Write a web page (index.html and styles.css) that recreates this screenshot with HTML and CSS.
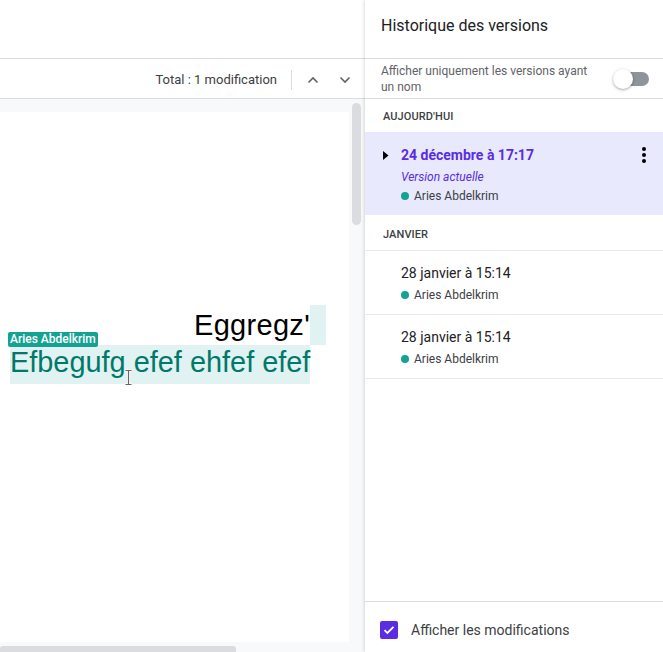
FILE: index.html
```html
<!DOCTYPE html>
<html lang="fr">
<head>
<meta charset="utf-8">
<title>Historique des versions</title>
<link rel="stylesheet" href="styles.css">
</head>
<body>
<div class="app">
  <main class="main">
    <div class="topbar"></div>
    <div class="toolbar">
      <span class="total">Total : 1 modification</span>
      <span class="divider"></span>
      <button class="nav-btn" aria-label="Précédente">
        <svg width="12" height="8" viewBox="0 0 12 8"><path d="M1.5 6.5 6 2l4.5 4.5" fill="none" stroke="#5f6368" stroke-width="1.6"/></svg>
      </button>
      <button class="nav-btn" aria-label="Suivante">
        <svg width="12" height="8" viewBox="0 0 12 8"><path d="M1.5 1.5 6 6l4.5-4.5" fill="none" stroke="#5f6368" stroke-width="1.6"/></svg>
      </button>
    </div>
    <div class="doc-area">
      <div class="doc-scroll">
        <div class="page">
          <div class="line line-right">
            <span class="plain">Eggregz'</span><span class="ins-gap"></span>
          </div>
          <div class="line line-ins">
            <span class="author-tag">Aries Abdelkrim</span>
            <span class="ins">Efbegufg efef ehfef efef</span>
            <svg class="ibeam" width="9" height="17" viewBox="0 0 9 17"><path d="M1.5 1.5h6M1.5 15.5h6M4.5 1.5v14" fill="none" stroke="#fff" stroke-width="3"/><path d="M1.5 1.5h6M1.5 15.5h6M4.5 1.5v14" fill="none" stroke="#666" stroke-width="1.2"/></svg>
          </div>
        </div>
        <div class="vscroll"><div class="vthumb"></div></div>
      </div>
      <div class="hscroll"><div class="hthumb"></div></div>
    </div>
  </main>
  <aside class="sidebar">
    <div class="side-header">Historique des versions</div>
    <div class="toggle-row">
      <span class="toggle-label">Afficher uniquement les versions ayant un nom</span>
      <span class="toggle"><span class="track"></span><span class="thumb"></span></span>
    </div>
    <div class="versions">
      <div class="group-label">AUJOURD'HUI</div>
      <div class="version selected">
        <svg class="caret" width="6" height="9" viewBox="0 0 6 9"><path d="M0 0l5.5 4.5L0 9z" fill="#000"/></svg>
        <div class="v-body">
          <div class="v-date">24 décembre à 17:17</div>
          <div class="v-current">Version actuelle</div>
          <div class="v-author"><span class="dot"></span>Aries Abdelkrim</div>
        </div>
        <svg class="kebab" width="4" height="16" viewBox="0 0 4 16"><circle cx="2" cy="2" r="2"/><circle cx="2" cy="8" r="2"/><circle cx="2" cy="14" r="2"/></svg>
      </div>
      <div class="group-label group-bordered">JANVIER</div>
      <div class="version">
        <div class="v-body">
          <div class="v-date plain-date">28 janvier à 15:14</div>
          <div class="v-author"><span class="dot"></span>Aries Abdelkrim</div>
        </div>
      </div>
      <div class="version">
        <div class="v-body">
          <div class="v-date plain-date">28 janvier à 15:14</div>
          <div class="v-author"><span class="dot"></span>Aries Abdelkrim</div>
        </div>
      </div>
    </div>
    <div class="side-footer">
      <span class="checkbox">
        <svg width="12" height="10" viewBox="0 0 12 10"><path d="M1.5 5.2 4.4 8 10.5 1.8" fill="none" stroke="#fff" stroke-width="1.8"/></svg>
      </span>
      <span class="footer-label">Afficher les modifications</span>
    </div>
  </aside>
</div>
</body>
</html>
```
FILE: styles.css
```css
* { box-sizing: border-box; }
html, body { margin: 0; padding: 0; height: 100%; overflow: hidden; }
body { font-family: Roboto, "Liberation Sans", Arial, sans-serif; color: #202124; background: #fff; }

.app { display: flex; width: 663px; height: 652px; }

.main { width: 365px; display: flex; flex-direction: column; }
.topbar { height: 59px; border-bottom: 1px solid #dadce0; flex: none; }
.toolbar {
  height: 40px; flex: none; border-bottom: 1px solid #dadce0;
  display: flex; align-items: center; justify-content: flex-end; padding-right: 4px; padding-top: 2px;
}
.total { font-size: 13px; color: #3c4043; margin-right: 14px; }
.divider { width: 1px; height: 20px; background: #dadce0; margin-right: 5px; }
.nav-btn { width: 32px; height: 32px; border: 0; background: none; padding: 0; display: flex; align-items: center; justify-content: center; }

.doc-area { flex: 1; background: #f8f9fa; display: flex; flex-direction: column; min-height: 0; }
.doc-scroll { flex: 1; display: flex; min-height: 0; }
.page { width: 349px; margin-top: 13px; background: #fff; padding: 193px 23px 0 10px; }
.vscroll { flex: 1; padding: 4px 0 0 3px; }
.vthumb { width: 9px; height: 122px; border-radius: 5px; background: #dadce0; }
.hscroll { height: 10px; padding-top: 4px; }
.hthumb { width: 236px; height: 6px; border-radius: 3px 3px 0 0; background: #dadce0; }

.line { font-family: "Liberation Sans", Arial, sans-serif; font-size: 29px; line-height: 40px; height: 40px; }
.line-right { display: flex; justify-content: flex-end; }
.plain { color: #000; letter-spacing: 0.3px; }
.ins-gap { width: 16px; background: #e0f2f1; }
.line-ins { position: relative; height: 39px; line-height: 35px; }
.ins { display: inline-block; vertical-align: top; background: #e0f2f1; color: #00796b; height: 39px; line-height: 35px; font-size: 28.9px; }
.author-tag {
  position: absolute; left: -2px; top: -13px; height: 15px; padding: 0 2px;
  background: #14a393; color: #fff; border-radius: 2px;
  font-family: Roboto, sans-serif; font-size: 12px; font-weight: 500; line-height: 15px; white-space: nowrap;
}
.ibeam { position: absolute; left: 114px; top: 24px; }

.sidebar {
  width: 298px; display: flex; flex-direction: column; background: #fff;
  box-shadow: -1px 0 3px rgba(60,64,67,.18); position: relative;
}
.side-header {
  height: 59px; flex: none; border-bottom: 1px solid #dadce0;
  padding-left: 16px; font-size: 16px; color: #202124; display: flex; align-items: center; padding-bottom: 8px;
}
.toggle-row {
  height: 40px; flex: none; border-bottom: 1px solid #dadce0;
  display: flex; align-items: center; padding: 1px 14px 0 16px;
}
.toggle-label { font-size: 12px; line-height: 16px; color: #5f6368; width: 220px; }
.toggle { margin-left: auto; position: relative; width: 36px; height: 20px; display: block; }
.track { position: absolute; left: 10px; top: 3px; width: 26px; height: 14px; border-radius: 7px; background: #8f939b; }
.thumb { position: absolute; left: 0; top: 0; width: 20px; height: 20px; border-radius: 50%; background: #fff; box-shadow: 0 1px 3px rgba(0,0,0,.35); }

.versions { flex: 1; }
.group-label { height: 33px; padding-left: 18px; padding-top: 2px; font-size: 11px; font-weight: 500; color: #3c4043; display: flex; align-items: center; letter-spacing: 0.1px; }
.group-bordered { height: 36px; border-bottom: 1px solid #e8eaed; padding-top: 4px; }

.version { height: 64px; border-bottom: 1px solid #e8eaed; display: flex; padding-left: 36px; }
.version .v-body { padding-top: 12px; }
.version.selected { height: 83px; background: #e8e9fd; border-bottom: 0; padding-left: 18px; }
.selected .caret { margin-top: 19px; margin-right: 12px; }
.selected .v-body { padding-top: 13px; flex: 1; }
.kebab { margin: 15px 17px 0 0; fill: #000; }

.v-date { font-size: 14px; line-height: 20px; font-weight: 700; color: #5a2de2; }
.plain-date { font-weight: 400; color: #202124; }
.v-current { font-size: 12px; font-style: italic; color: #5a2de2; line-height: 16px; margin-top: 4px; }
.v-author { font-size: 12px; color: #3c4043; line-height: 16px; display: flex; align-items: center; margin-top: 3px; }
.version:not(.selected) .v-author { margin-top: 4px; }
.dot { width: 8px; height: 8px; border-radius: 50%; background: #12a393; margin-right: 5px; }

.side-footer { height: 51px; flex: none; border-top: 1px solid #dadce0; display: flex; align-items: center; padding-left: 15px; padding-top: 6px; }
.checkbox { width: 18px; height: 18px; border-radius: 2px; background: #5a2de2; display: flex; align-items: center; justify-content: center; margin-right: 13px; }
.footer-label { font-size: 14px; color: #3c4043; }
```
